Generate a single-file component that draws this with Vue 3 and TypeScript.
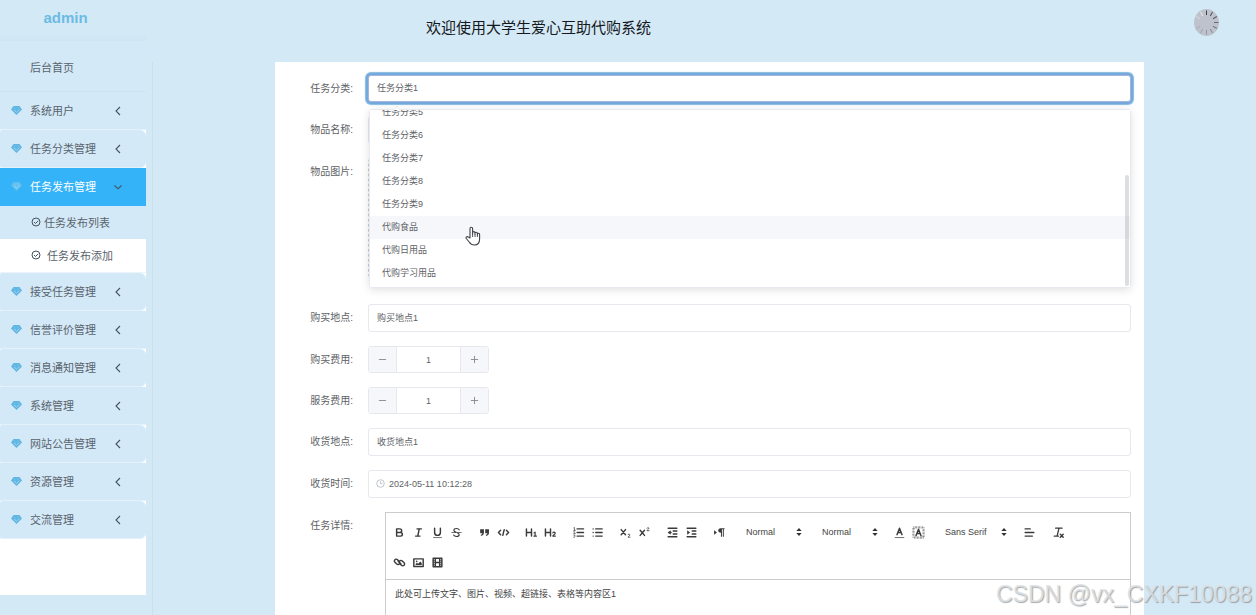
<script setup lang="ts">
import { ref } from 'vue'

interface MenuItem {
  title: string
  rounded?: boolean
  open?: boolean
  children?: { title: string; current?: boolean }[]
}

const menu: MenuItem[] = [
  { title: '系统用户' },
  { title: '任务分类管理', rounded: true },
  {
    title: '任务发布管理',
    open: true,
    children: [{ title: '任务发布列表' }, { title: '任务发布添加', current: true }],
  },
  { title: '接受任务管理', rounded: true },
  { title: '信誉评价管理' },
  { title: '消息通知管理', rounded: true },
  { title: '系统管理' },
  { title: '网站公告管理', rounded: true },
  { title: '资源管理' },
  { title: '交流管理', rounded: true },
]

const visibleCategories = [
  '任务分类5',
  '任务分类6',
  '任务分类7',
  '任务分类8',
  '任务分类9',
  '代购食品',
  '代购日用品',
  '代购学习用品',
]
const category = ref('任务分类1')
const hovered = ref('代购食品')
const itemName = ref('')
const buyPlace = ref('购买地点1')
const buyCost = ref(1)
const serviceCost = ref(1)
const receivePlace = ref('收货地点1')
const receiveTime = ref('2024-05-11 10:12:28')

const ticks = [
  { angle: 0, color: '#3c4046' },
  { angle: 30, color: '#4a4e55' },
  { angle: 60, color: '#585c64' },
  { angle: 90, color: '#666a72' },
  { angle: 120, color: '#747881' },
  { angle: 150, color: '#858993' },
  { angle: 180, color: '#9296a0' },
  { angle: 210, color: '#a0a4ae' },
  { angle: 240, color: '#acb0ba' },
  { angle: 300, color: '#d3d6de' },
  { angle: 330, color: '#e6e8ee' },
]

type Tool = { name: string; svg: string }
const L = (d: string, w = 2) =>
  `<path d="${d}" fill="none" stroke="#3a3a3a" stroke-width="${w}" stroke-linecap="round" stroke-linejoin="round"/>`
const F = (d: string) => `<path d="${d}" fill="#3a3a3a"/>`

const textTools: Tool[][] = [
  [
    { name: '加粗', svg: L('M5 4h4.5a2.5 2.5 0 0 1 0 5H5zM5 9h5.5a2.5 2.5 0 0 1 0 5H5z') },
    { name: '斜体', svg: L('M7 4h6M5 14h6M8 14l2-10') },
    { name: '下划线', svg: L('M5 3v6a4 4 0 0 0 8 0V3') + L('M3.5 16h11', 1) },
    {
      name: '删除线',
      svg: L('M2.5 9h13', 1) + L('M12.7 5.3C12 3.8 10.600 3.500 9 3.500c-2.200 0-3.600 1-3.600 2.500 0 1.300 1 2 2.600 2.500M10.500 9.700c1.400.5 2.200 1.200 2.200 2.400 0 1.500-1.500 2.400-3.700 2.400-1.900 0-3.300-.6-4-1.900', 1.6),
    },
  ],
  [
    {
      name: '引用',
      svg: F('M3 4.500h5.200v5C8.200 12 6.500 13.800 4 13.800V12c1.300-.3 2-1 2-2H3zM10 4.500h5.200v5c0 2.500-1.700 4.300-4.200 4.300V12c1.300-.3 2-1 2-2h-3z'),
    },
    { name: '代码', svg: L('M5 6 2 9l3 3M13 6l3 3-3 3M10 5 8 13') },
  ],
  [
    { name: '标题一', svg: L('M2 4v10M9 4v10M2 9h7') + L('M12.500 9.500 14 8.500V14M12.300 14h3.600', 1.6) },
    { name: '标题二', svg: L('M2 4v10M9 4v10M2 9h7') + L('M12.200 9.500c.6-1.500 3.400-1.200 3.300.5 0 1.500-3.300 2.400-3.300 4h3.600', 1.6) },
  ],
  [
    {
      name: '有序列表',
      svg: L('M7 4h9M7 9h9M7 14h9', 1.8) + L('M2.500 2.500l1-.5v4M2.300 6h2.400M2.300 7.800c1.500-.8 2.600.3 0 2.600h2.400M2.300 12.500h2L3.500 14c1.500.2 1 2-1.200 1.600', 0.9),
    },
    { name: '无序列表', svg: L('M6.500 4h9M6.500 9h9M6.500 14h9', 1.8) + L('M3 4h.01M3 9h.01M3 14h.01') },
  ],
  [
    { name: '下标', svg: L('M3 5l6 7M9 5l-6 7') + L('M12.500 12c.6-1.200 2.700-1 2.500.4 0 1.100-2.500 2-2.500 3.100h2.800', 1.1) },
    { name: '上标', svg: L('M3 6l6 7M9 6l-6 7') + L('M12.500 3c.6-1.200 2.700-1 2.500.4 0 1.100-2.500 2-2.500 3.100h2.800', 1.1) },
  ],
  [
    { name: '减少缩进', svg: L('M3 3h12M3 15h12M10 7h5M10 11h5M4 9h3') + F('M6.500 5.800v6.400L2.500 9z') },
    { name: '增加缩进', svg: L('M3 3h12M3 15h12M10 7h5M10 11h5') + F('M3 5.800v6.400L7 9z') },
  ],
  [{ name: '文本方向', svg: F('M1.500 6v6L5.500 9zM10.500 3H16v1.500h-1V15h-1.400V4.500h-1.200V15H11V9.500C8.500 9.500 7.200 8 7.200 6.300S8.500 3 10.500 3z') }],
]

const colourTools: Tool[] = [
  { name: '文字颜色', svg: L('M5.500 12 9 3l3.500 9M6.800 9h4.400') + L('M3 16h12', 1) },
  {
    name: '背景颜色',
    svg:
      '<rect x="2" y="2" width="14" height="14" fill="none" stroke="#777" stroke-width="3" stroke-dasharray="1 1"/>' +
      L('M5.500 13.500 9 4.500l3.500 9M6.800 10.500h4.400'),
  },
]

const mediaTools: Tool[] = [
  {
    name: '链接',
    svg: L('M7 7l4 4M8.800 11.200c1-1 1-2.600 0-3.600L6.300 5.100a2.500 2.500 0 0 0-3.600 0 2.500 2.500 0 0 0 0 3.600l2.500 2.500c1 1 2.600 1 3.600 0M9.200 6.800c-1 1-1 2.600 0 3.600l2.500 2.500a2.500 2.500 0 0 0 3.600 0 2.500 2.500 0 0 0 0-3.600l-2.500-2.500c-1-1-2.600-1-3.600 0'),
  },
  {
    name: '图片',
    svg: L('M2.500 4h13v10.500h-13z') + '<circle cx="6.500" cy="7.500" r="1.100" fill="#3a3a3a"/>' + F('M5 12.500V11l2-1.500 1.500 1.200 3-3.200 2 2.500v2.500z'),
  },
  { name: '视频', svg: L('M3 3h12v12H3zM6 3v12M12 3v12M6 9h6') + L('M3 6.500h2.500M3 9h2.500M3 12h2.500M12.500 6.500H15M12.500 9H15M12.500 12H15', 1) },
]

const alignTool = L('M3 4h7M3 9h12M3 14h10')
const cleanTool: Tool = {
  name: '清除格式',
  svg: L('M5 3h9M9.700 3 7.300 13M3 14h6', 1.8) + L('M11.500 11.500l4 4M15.500 11.500l-4 4', 2),
}
</script>

<template>
  <div class="page">
    <aside class="sidebar">
      <div class="brand">admin</div>
      <a class="home" href="#">后台首页</a>
      <ul class="menu">
        <li v-for="item in menu" :key="item.title">
          <button type="button" class="menu-item" :class="{ rounded: item.rounded, active: item.open }">
            <svg class="gem" viewBox="0 0 22 18">
              <path d="M5 0h12l5 7-11 11L0 7z" fill="currentColor" />
              <path d="M6 8l5 4.500L17 7" fill="none" stroke="#d3e8f7" stroke-opacity=".7" stroke-width="1.600" />
              <path d="M6 4l3 2M12 4h4" fill="none" stroke="#d3e8f7" stroke-opacity=".45" stroke-width="1.200" />
            </svg>
            <span class="menu-text">{{ item.title }}</span>
            <svg class="chevron" viewBox="0 0 10 10">
              <path :d="item.open ? 'M1.500 3.500 5 6.800 8.500 3.500' : 'M7 1 3 5l4 4'" fill="none" stroke="currentColor" stroke-width="1.100" />
            </svg>
          </button>
          <ul v-if="item.children" class="submenu">
            <li v-for="child in item.children" :key="child.title">
              <a href="#" class="sub-item" :class="{ current: child.current }">
                <svg class="check" viewBox="0 0 10 10">
                  <circle cx="5" cy="5" r="4" fill="none" stroke="currentColor" />
                  <path d="M3 5l1.500 1.500L7.200 3.800" fill="none" stroke="currentColor" />
                </svg>
                <span>{{ child.title }}</span>
              </a>
            </li>
          </ul>
        </li>
      </ul>
    </aside>

    <div class="main">
      <header class="header">
        <h1>欢迎使用大学生爱心互助代购系统</h1>
        <svg class="avatar" viewBox="0 0 25 27">
          <ellipse cx="12.500" cy="13.500" rx="12.500" ry="13.500" fill="#bec2cc" />
          <line
            v-for="t in ticks"
            :key="t.angle"
            x1="12.500"
            y1="1.500"
            x2="12.500"
            y2="6"
            :stroke="t.color"
            stroke-width="1"
            :transform="`rotate(${t.angle} 12.5 13.5)`"
          />
        </svg>
      </header>

      <main class="content">
        <form class="card" @submit.prevent>
          <div class="row">
            <label for="category">任务分类:</label>
            <div class="control">
              <select id="category" v-model="category" class="box focused">
                <option>任务分类1</option>
                <option v-for="c in visibleCategories" :key="c">{{ c }}</option>
              </select>
              <div class="popper">
                <i class="popper-arrow"></i>
                <div class="popper-view">
                  <ul class="options" role="listbox" aria-label="任务分类">
                    <li v-for="c in visibleCategories" :key="c" role="option" :class="{ hover: c === hovered }">{{ c }}</li>
                  </ul>
                </div>
                <span class="thumb"></span>
                <svg class="hand" viewBox="0 0 16 20">
                  <path
                    d="M5 12V2.500a1.300 1.300 0 0 1 2.600 0V8 6.800a1.200 1.200 0 0 1 2.400 0V8.200 7.400a1.200 1.200 0 0 1 2.400 0V9 8.300a1.100 1.100 0 0 1 2.200 0V13c0 4-2 6-5.200 6-2.600 0-4-1-5.200-3L1.300 12.500c-.8-1.400.8-2.500 2-1.400z"
                    fill="#fff"
                    stroke="#3f4247"
                    stroke-width="1.100"
                    stroke-linejoin="round"
                  />
                  <path d="M7.600 8v3M10 8.200V11M12.400 9v2" fill="none" stroke="#3f4247" stroke-width=".9" />
                </svg>
              </div>
            </div>
          </div>

          <div class="row">
            <label for="item-name">物品名称:</label>
            <div class="control"><input id="item-name" v-model="itemName" class="box" type="text" /></div>
          </div>

          <div class="row">
            <label for="item-image">物品图片:</label>
            <div class="control"><button id="item-image" type="button" class="upload" aria-label="物品图片"></button></div>
          </div>

          <div class="row">
            <label for="buy-place">购买地点:</label>
            <div class="control"><input id="buy-place" v-model="buyPlace" class="box" type="text" /></div>
          </div>

          <div class="row">
            <label for="buy-cost">购买费用:</label>
            <div class="control">
              <div class="stepper">
                <button type="button" aria-label="减少" @click="buyCost--">
                  <svg viewBox="0 0 10 10"><path d="M1 5h8" /></svg>
                </button>
                <input id="buy-cost" v-model="buyCost" type="text" />
                <button type="button" aria-label="增加" @click="buyCost++">
                  <svg viewBox="0 0 10 10"><path d="M1 5h8M5 1v8" /></svg>
                </button>
              </div>
            </div>
          </div>

          <div class="row">
            <label for="service-cost">服务费用:</label>
            <div class="control">
              <div class="stepper">
                <button type="button" aria-label="减少" @click="serviceCost--">
                  <svg viewBox="0 0 10 10"><path d="M1 5h8" /></svg>
                </button>
                <input id="service-cost" v-model="serviceCost" type="text" />
                <button type="button" aria-label="增加" @click="serviceCost++">
                  <svg viewBox="0 0 10 10"><path d="M1 5h8M5 1v8" /></svg>
                </button>
              </div>
            </div>
          </div>

          <div class="row">
            <label for="receive-place">收货地点:</label>
            <div class="control"><input id="receive-place" v-model="receivePlace" class="box" type="text" /></div>
          </div>

          <div class="row">
            <label for="receive-time">收货时间:</label>
            <div class="control">
              <div class="box date">
                <svg viewBox="0 0 10 10">
                  <circle cx="5" cy="5" r="4.200" />
                  <path d="M5 2.500V5.200h2.200" />
                </svg>
                <input id="receive-time" v-model="receiveTime" type="text" />
              </div>
            </div>
          </div>

          <div class="row">
            <label id="detail-label">任务详情:</label>
            <div class="control">
              <div class="editor">
                <div class="toolbar">
                  <div v-for="(group, i) in textTools" :key="i" class="group">
                    <button v-for="t in group" :key="t.name" type="button" class="tool" :aria-label="t.name">
                      <svg viewBox="0 0 18 18" v-html="t.svg"></svg>
                    </button>
                  </div>
                  <div class="picker">
                    <select aria-label="字号"><option>Normal</option></select>
                    <svg viewBox="0 0 18 18"><path d="M5 7.500 9 3l4 4.500zM5 10.500 9 15l4-4.500z" /></svg>
                  </div>
                  <div class="picker">
                    <select aria-label="标题级别"><option>Normal</option></select>
                    <svg viewBox="0 0 18 18"><path d="M5 7.500 9 3l4 4.500zM5 10.500 9 15l4-4.500z" /></svg>
                  </div>
                  <div class="group">
                    <button v-for="t in colourTools" :key="t.name" type="button" class="tool" :aria-label="t.name">
                      <svg viewBox="0 0 18 18" v-html="t.svg"></svg>
                    </button>
                  </div>
                  <div class="picker wide">
                    <select aria-label="字体"><option>Sans Serif</option></select>
                    <svg viewBox="0 0 18 18"><path d="M5 7.500 9 3l4 4.500zM5 10.500 9 15l4-4.500z" /></svg>
                  </div>
                  <button type="button" class="tool align" aria-label="对齐">
                    <svg viewBox="0 0 18 18" v-html="alignTool"></svg>
                  </button>
                  <button type="button" class="tool" :aria-label="cleanTool.name">
                    <svg viewBox="0 0 18 18" v-html="cleanTool.svg"></svg>
                  </button>
                  <div class="group">
                    <button v-for="t in mediaTools" :key="t.name" type="button" class="tool" :aria-label="t.name">
                      <svg viewBox="0 0 18 18" v-html="t.svg"></svg>
                    </button>
                  </div>
                </div>
                <div class="editor-body" contenteditable="true" role="textbox" aria-labelledby="detail-label">此处可上传文字、图片、视频、超链接、表格等内容区1</div>
              </div>
            </div>
          </div>
        </form>
      </main>
    </div>

    <div class="watermark">CSDN @vx_CXKF10088</div>
  </div>
</template>

<style>
body {
  margin: 0;
  background: #d4e9f6;
}
</style>

<style scoped>
* {
  box-sizing: border-box;
}
.page {
  position: relative;
  display: flex;
  height: 100vh;
  overflow: hidden;
  background: #d4e9f6;
  color: #606266;
  font-family: "Liberation Sans", "Noto Sans CJK SC", sans-serif;
  font-size: 9px;
}
button,
input,
select {
  margin: 0;
  padding: 0;
  border: 0;
  border-radius: 0;
  background: none;
  color: inherit;
  font: inherit;
  outline: none;
  appearance: none;
}
ul {
  margin: 0;
  padding: 0;
  list-style: none;
}
a {
  color: inherit;
  text-decoration: none;
}
svg {
  display: block;
  flex: none;
}

.sidebar {
  flex: none;
  display: flex;
  flex-direction: column;
  width: 146px;
  height: calc(100vh - 20px);
  background: #fff;
  font-size: 11px;
  color: #59636c;
}
.brand {
  height: 41px;
  padding: 0 15px 5px 0;
  background: linear-gradient(#d4e9f6 34px, #cfe5f3);
  color: #6cbbe4;
  font-size: 15px;
  font-weight: bold;
  line-height: 36px;
  text-align: center;
}
.home {
  height: 51px;
  padding-left: 30px;
  border-bottom: 1px solid #cde3f1;
  background: #d4e9f7;
  line-height: 55px;
}
.menu-item {
  display: flex;
  align-items: center;
  width: 100%;
  height: 38px;
  padding: 0 23px 0 11px;
  border-bottom: 1px solid #e3f1fa;
  background: #d3e9f8;
  text-align: left;
}
.menu-item.rounded {
  border-radius: 2px 6px 6px 2px;
}
.menu-item.active {
  border-bottom-color: #34b3f9;
  background: #34b3f9;
  color: #fff;
}
.gem {
  width: 11px;
  height: 9px;
  margin-right: 8px;
  color: #5fb6e2;
}
.active .gem {
  color: #60bfee;
}
.menu-text {
  flex: 1;
  padding-bottom: 2px;
}
.chevron {
  width: 10px;
  height: 10px;
  color: #46525c;
}
.submenu {
  border-bottom: 1px solid #eaf4fa;
}
.sub-item {
  display: flex;
  align-items: center;
  gap: 3px;
  height: 33px;
  padding: 0 0 2px 31px;
  background: #d4e9f7;
}
.sub-item.current {
  gap: 6px;
  background: #fff;
}
.check {
  width: 10px;
  height: 10px;
  color: #46525c;
}

.main {
  flex: 1;
  display: flex;
  flex-direction: column;
  min-width: 0;
  margin-left: 6px;
}
.header {
  flex: none;
  display: flex;
  justify-content: space-between;
  align-items: flex-start;
  height: 62px;
  padding: 9px 37px 0 274px;
}
.header h1 {
  margin: 0;
  color: #15181c;
  font-size: 15px;
  font-weight: normal;
  line-height: 37px;
}
.avatar {
  width: 25px;
  height: 27px;
}
.content {
  flex: 1;
  padding: 0 112px 0 122px;
  border-left: 1px solid #cddfeb;
}
.card {
  display: flex;
  flex-direction: column;
  gap: 14px;
  padding: 13px 13px 20px 0;
  background: #fff;
}
.row {
  display: flex;
}
.row > label {
  flex: none;
  width: 93px;
  padding-right: 15px;
  font-size: 10px;
  line-height: 27px;
  text-align: right;
}
.control {
  position: relative;
  flex: 1;
  min-width: 0;
}
.box {
  display: block;
  width: 100%;
  height: 28px;
  padding: 0 8px 1px;
  border: 1px solid #e6e8ed;
  border-radius: 3px;
  background: #fff;
}
.box.focused {
  height: 27px;
  border-color: #a5b4dc;
  box-shadow: 0 0 0 2px #74a9db, 0 0 1px 3px #85b9e2;
}
.date {
  display: flex;
  align-items: center;
  gap: 4px;
  padding-left: 7px;
}
.date svg {
  width: 9px;
  height: 9px;
  fill: none;
  stroke: #b9bdc5;
  stroke-width: 1;
}
.date input {
  flex: 1;
}
.upload {
  display: block;
  width: 120px;
  height: 120px;
  margin-bottom: 12px;
  border: 1px dashed #c9ccd2;
  border-radius: 4px;
}
.stepper {
  display: flex;
  width: 121px;
  height: 27px;
  border: 1px solid #e6e8ed;
  border-radius: 3px;
  overflow: hidden;
}
.stepper button {
  display: flex;
  align-items: center;
  justify-content: center;
  width: 27px;
  background: #f5f7fa;
}
.stepper svg {
  width: 9px;
  height: 9px;
  fill: none;
  stroke: #85888f;
  stroke-width: 1;
}
.stepper input {
  flex: 1;
  min-width: 0;
  border: solid #e6e8ed;
  border-width: 0 1px;
  text-align: center;
}

.popper {
  position: absolute;
  z-index: 2;
  top: 34px;
  left: 1px;
  right: 0;
  height: 179px;
  border: 1px solid #e6e9ef;
  border-radius: 3px;
  background: #fff;
  box-shadow: 0 2px 8px rgba(0, 0, 0, 0.12);
}
.popper-arrow {
  position: absolute;
  top: -3px;
  left: 24px;
  width: 6px;
  height: 6px;
  border: solid #e6e9ef;
  border-width: 1px 0 0 1px;
  background: #fff;
  transform: rotate(45deg);
}
.popper-view {
  position: relative;
  display: flex;
  flex-direction: column;
  justify-content: flex-end;
  height: 100%;
  padding-bottom: 2px;
  overflow: hidden;
  background: #fff;
}
.options li {
  height: 23px;
  padding: 0 12px;
  line-height: 23px;
}
.options li.hover {
  background: #f5f7fa;
}
.thumb {
  position: absolute;
  right: 1px;
  bottom: 1px;
  width: 4px;
  height: 111px;
  border-radius: 2px;
  background: rgba(144, 147, 153, 0.3);
}
.hand {
  position: absolute;
  top: 116px;
  left: 95px;
  width: 16px;
  height: 20px;
}

.editor {
  margin-left: 17px;
  border: 1px solid #ccc;
}
.toolbar {
  display: flex;
  flex-wrap: wrap;
  gap: 14px 9px;
  padding: 11px 4px 9px;
  border-bottom: 1px solid #ccc;
}
.group {
  display: flex;
}
.tool {
  display: flex;
  align-items: center;
  justify-content: center;
  width: 19px;
  height: 16px;
}
.tool.align {
  width: 21px;
}
.tool svg {
  width: 13px;
  height: 13px;
}
.picker {
  position: relative;
  width: 67px;
  height: 16px;
  color: #444;
}
.picker.wide {
  width: 73px;
}
.picker select {
  width: 100%;
  height: 16px;
  padding-left: 8px;
}
.picker svg {
  position: absolute;
  top: 2px;
  right: 0;
  width: 12px;
  height: 12px;
  fill: #333;
  pointer-events: none;
}
.editor-body {
  min-height: 200px;
  padding: 8px 9px;
  color: #444;
  line-height: 13px;
  outline: none;
}

.watermark {
  position: absolute;
  right: 4px;
  bottom: 8px;
  color: rgba(222, 225, 228, 0.85);
  font-size: 23px;
  line-height: 26px;
  text-shadow: 1px 1px 1px rgba(110, 115, 120, 0.6);
  pointer-events: none;
}
</style>
